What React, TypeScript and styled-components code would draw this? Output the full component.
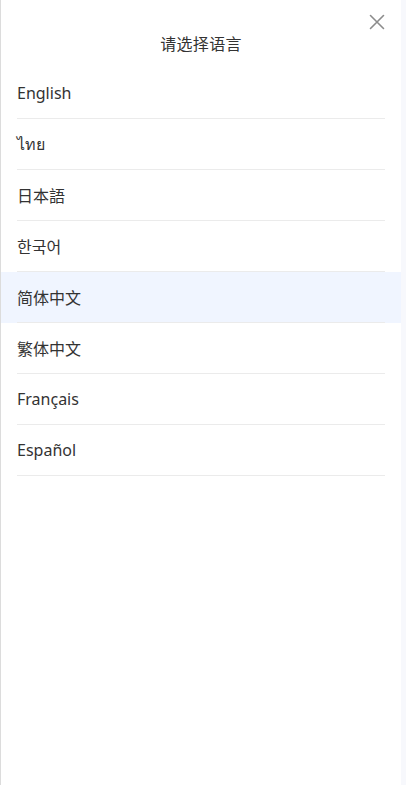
import styled, { createGlobalStyle } from "styled-components";
import { useState } from "react";

const languages = [
  { code: "en", label: "English" },
  { code: "th", label: "ไทย" },
  { code: "ja", label: "日本語" },
  { code: "ko", label: "한국어" },
  { code: "zh-CN", label: "简体中文" },
  { code: "zh-TW", label: "繁体中文" },
  { code: "fr", label: "Français" },
  { code: "es", label: "Español" },
];

export default function App() {
  const [current, setCurrent] = useState("zh-CN");

  return (
    <>
      <GlobalStyle />
      <Page>
        <Panel>
          <CloseButton aria-label="close">
            <svg width="16" height="16" viewBox="0 0 16 16">
              <path d="M1.5 1.5 L14.5 14.5 M14.5 1.5 L1.5 14.5" stroke="#8c8c8c" strokeWidth="1.6" strokeLinecap="round" />
            </svg>
          </CloseButton>
          <Header>
            <Title>请选择语言</Title>
          </Header>
          <List>
            {languages.map((lang) => (
              <Row key={lang.code} $active={lang.code === current} onClick={() => setCurrent(lang.code)}>
                <RowInner>{lang.label}</RowInner>
              </Row>
            ))}
          </List>
        </Panel>
        <Side />
      </Page>
    </>
  );
}

const GlobalStyle = createGlobalStyle`
  html, body {
    margin: 0;
    padding: 0;
    background: #ffffff;
  }
  body {
    font-family: "Noto Sans", "Noto Sans CJK SC", "Noto Sans CJK KR", "Noto Sans CJK JP", sans-serif;
  }
`;

const Page = styled.div`
  display: flex;
  height: 785px;
  width: 406px;
`;

const Panel = styled.div`
  position: relative;
  width: 400px;
  border-left: 1px solid #dcdcdc;
  background: #ffffff;
  display: flex;
  flex-direction: column;
`;

const Side = styled.div`
  flex: 1;
  background: #f7f8fc;
`;

const CloseButton = styled.button`
  position: absolute;
  top: 13px;
  right: 15px;
  width: 18px;
  height: 18px;
  padding: 1px;
  border: none;
  background: none;
  cursor: pointer;
  display: flex;
  align-items: center;
  justify-content: center;
`;

const Header = styled.div`
  height: 68px;
  box-sizing: border-box;
  padding-top: 31px;
  display: flex;
  justify-content: center;
`;

const Title = styled.h2`
  margin: 0;
  font-size: 16px;
  line-height: 26px;
  font-weight: 400;
  color: #333333;
  letter-spacing: 0.3px;
`;

const List = styled.ul`
  list-style: none;
  margin: 0;
  padding: 0;
`;

const Row = styled.li<{ $active: boolean }>`
  padding: 0 16px;
  background: ${({ $active }) => ($active ? "#f0f5ff" : "transparent")};
  cursor: pointer;
`;

const RowInner = styled.div`
  height: 50px;
  display: flex;
  align-items: center;
  border-bottom: 1px solid #ebebeb;
  font-size: 16px;
  color: #333333;
`;
